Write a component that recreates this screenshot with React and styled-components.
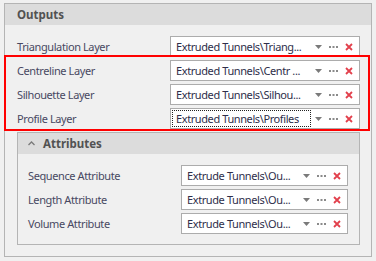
import React from "react";
import styled, { createGlobalStyle } from "styled-components";

const Global = createGlobalStyle`
  html, body { margin: 0; padding: 0; background: #f0f0f0; }
  body { font-family: "Noto Sans", "Open Sans", sans-serif; font-size: 11px; }
`;

const Page = styled.div`
  width: 376px;
  height: 261px;
  padding: 3px 4px 0 4px;
  box-sizing: border-box;
  background: #f0f0f0;
`;

const Group = styled.section`
  border: 1px solid #b4b4b4;
  background: #f0f0f0;
  margin: ${(p) => p.$margin || "0"};
`;

const GroupHeader = styled.div`
  height: 21px;
  background: #dcdcdc;
  display: flex;
  align-items: center;
  padding-left: ${(p) => p.$pad || 12}px;
  gap: 8px;
  font-weight: bold;
  font-size: 11.5px;
  color: #525252;
`;

const GroupBody = styled.div`
  display: flex;
  flex-direction: column;
  gap: 3px;
  padding: ${(p) => p.$padding};
`;

const Highlight = styled.div`
  position: relative;
  display: flex;
  flex-direction: column;
  gap: 3px;
  &::after {
    content: "";
    position: absolute;
    top: -5px;
    left: -1px;
    right: 1px;
    bottom: -2px;
    border: 2px solid #ff0000;
    pointer-events: none;
  }
`;

const Row = styled.div`
  display: flex;
  align-items: center;
  height: 21px;
  padding-left: ${(p) => p.$indent}px;
  padding-right: ${(p) => p.$right}px;
`;

const Label = styled.span`
  flex: 1;
  color: #484862;
  white-space: nowrap;
  letter-spacing: -0.4px;
`;

const Combo = styled.div`
  width: ${(p) => p.$width}px;
  height: 21px;
  box-sizing: border-box;
  border: 1px solid #acacac;
  background: #ffffff;
  display: flex;
  align-items: center;
`;

const ComboText = styled.div`
  flex: 1;
  height: 17px;
  margin-left: 1px;
  padding-left: 3px;
  display: flex;
  align-items: center;
  color: #2e2e4a;
  white-space: nowrap;
  overflow: hidden;
  letter-spacing: -0.4px;
  box-sizing: border-box;
  border: 1px dotted ${(p) => (p.$focused ? "#222" : "transparent")};
`;

const Buttons = styled.div`
  display: flex;
  align-items: center;
  padding-right: 3px;
`;

const Btn = styled.span`
  width: 15px;
  height: 19px;
  display: flex;
  align-items: center;
  justify-content: center;
`;

const Arrow = () => (
  <svg width="7" height="4" viewBox="0 0 7 4">
    <path d="M0 0 H7 L3.5 4 Z" fill="#7a7a7a" />
  </svg>
);

const Dots = () => (
  <svg width="9" height="2" viewBox="0 0 9 2">
    <rect x="0" y="0" width="2" height="2" fill="#8a8a8a" />
    <rect x="3.5" y="0" width="2" height="2" fill="#8a8a8a" />
    <rect x="7" y="0" width="2" height="2" fill="#8a8a8a" />
  </svg>
);

const Cross = () => (
  <svg width="8" height="8" viewBox="0 0 8 8">
    <path d="M1 1 L7 7 M7 1 L1 7" stroke="#e2404c" strokeWidth="1.8" />
  </svg>
);

const Chevron = () => (
  <svg width="7" height="5" viewBox="0 0 7 5">
    <path d="M0.5 4 L3.5 1 L6.5 4" stroke="#7a7a7a" strokeWidth="1.3" fill="none" />
  </svg>
);

const Field = ({ label, value, width, indent, right, focused }) => (
  <Row $indent={indent} $right={right}>
    <Label>{label}</Label>
    <Combo $width={width}>
      <ComboText $focused={focused}>{value}</ComboText>
      <Buttons>
        <Btn><Arrow /></Btn>
        <Btn><Dots /></Btn>
        <Btn><Cross /></Btn>
      </Buttons>
    </Combo>
  </Row>
);

export default function App() {
  return (
    <>
      <Global />
      <Page>
        <Group>
          <GroupHeader>Outputs</GroupHeader>
          <GroupBody $padding="11px 0 11px 0">
            <Field label="Triangulation Layer" value="Extruded Tunnels\Triang..." width={190} indent={12} right={11} />
            <Highlight>
              <Field label="Centreline Layer" value="Extruded Tunnels\Centr ..." width={190} indent={12} right={11} />
              <Field label="Silhouette Layer" value="Extruded Tunnels\Silhou..." width={190} indent={12} right={11} />
              <Field label="Profile Layer" value="Extruded Tunnels\Profiles" width={190} indent={12} right={11} focused />
            </Highlight>
            <Group $margin="0 11px 0 12px">
              <GroupHeader $pad={10}>
                <Chevron />
                Attributes
              </GroupHeader>
              <GroupBody $padding="11px 0 10px 0">
                <Field label="Sequence Attribute" value="Extrude Tunnels\Ou..." width={167} indent={10} right={11} />
                <Field label="Length Attribute" value="Extrude Tunnels\Ou..." width={167} indent={10} right={11} />
                <Field label="Volume Attribute" value="Extrude Tunnels\Ou..." width={167} indent={10} right={11} />
              </GroupBody>
            </Group>
          </GroupBody>
        </Group>
      </Page>
    </>
  );
}
